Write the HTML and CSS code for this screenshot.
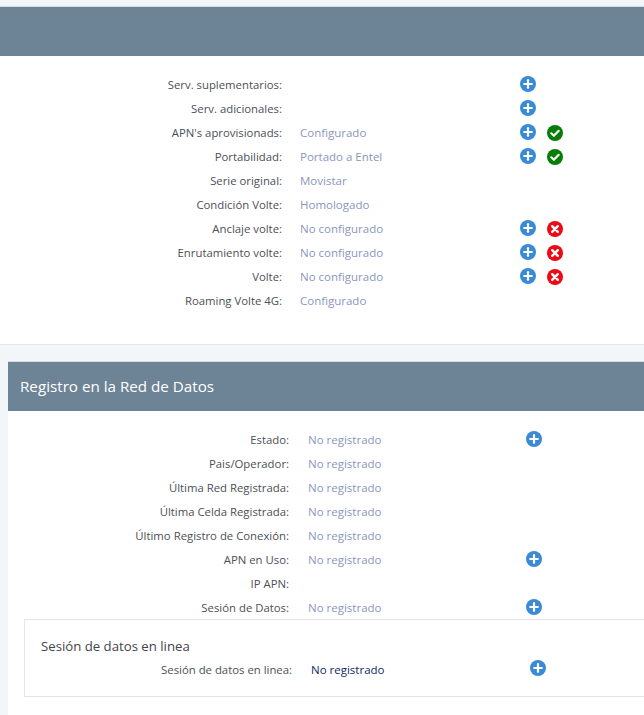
FILE: index.html
```html
<!DOCTYPE html>
<html lang="es">
<head>
<meta charset="utf-8">
<title>Registro</title>
<link rel="stylesheet" href="styles.css">
</head>
<body>
<svg class="defs" width="0" height="0" aria-hidden="true">
  <symbol id="plus" viewBox="0 0 16 16"><circle cx="8" cy="8" r="8" fill="#3a8ad6"/><path d="M8 4.2v7.6M4.2 8h7.6" stroke="#fff" stroke-width="2.2" stroke-linecap="round"/></symbol>
  <symbol id="ok" viewBox="0 0 16 16"><circle cx="8" cy="8" r="8" fill="#067d06"/><path d="M4.3 8.3l2.6 2.5 4.8-5" fill="none" stroke="#fff" stroke-width="2.2" stroke-linecap="round" stroke-linejoin="round"/></symbol>
  <symbol id="no" viewBox="0 0 16 16"><circle cx="8" cy="8" r="8" fill="#ee0a14"/><path d="M5.2 5.2l5.6 5.6M10.8 5.2l-5.6 5.6" stroke="#fff" stroke-width="2.4" stroke-linecap="round"/></symbol>
</svg>
<div class="page">
  <section class="card card-first">
    <div class="card-head"></div>
    <div class="card-body">
      <div class="row"><span class="label">Serv. suplementarios:</span><span class="value"></span><span class="icons"><svg class="ic"><use href="#plus"/></svg></span></div>
      <div class="row"><span class="label">Serv. adicionales:</span><span class="value"></span><span class="icons"><svg class="ic"><use href="#plus"/></svg></span></div>
      <div class="row"><span class="label">APN's aprovisionads:</span><span class="value">Configurado</span><span class="icons"><svg class="ic"><use href="#plus"/></svg><svg class="ic st"><use href="#ok"/></svg></span></div>
      <div class="row"><span class="label">Portabilidad:</span><span class="value">Portado a Entel</span><span class="icons"><svg class="ic"><use href="#plus"/></svg><svg class="ic st"><use href="#ok"/></svg></span></div>
      <div class="row"><span class="label">Serie original:</span><span class="value">Movistar</span><span class="icons"></span></div>
      <div class="row"><span class="label">Condición Volte:</span><span class="value">Homologado</span><span class="icons"></span></div>
      <div class="row"><span class="label">Anclaje volte:</span><span class="value">No configurado</span><span class="icons"><svg class="ic"><use href="#plus"/></svg><svg class="ic st"><use href="#no"/></svg></span></div>
      <div class="row"><span class="label">Enrutamiento volte:</span><span class="value">No configurado</span><span class="icons"><svg class="ic"><use href="#plus"/></svg><svg class="ic st"><use href="#no"/></svg></span></div>
      <div class="row"><span class="label">Volte:</span><span class="value">No configurado</span><span class="icons"><svg class="ic"><use href="#plus"/></svg><svg class="ic st"><use href="#no"/></svg></span></div>
      <div class="row"><span class="label">Roaming Volte 4G:</span><span class="value">Configurado</span><span class="icons"></span></div>
    </div>
  </section>
  <section class="card card-second">
    <div class="card-head"><h2 class="card-title">Registro en la Red de Datos</h2></div>
    <div class="card-body">
      <div class="row"><span class="label">Estado:</span><span class="value">No registrado</span><span class="icons"><svg class="ic"><use href="#plus"/></svg></span></div>
      <div class="row"><span class="label">Pais/Operador:</span><span class="value">No registrado</span><span class="icons"></span></div>
      <div class="row"><span class="label">Última Red Registrada:</span><span class="value">No registrado</span><span class="icons"></span></div>
      <div class="row"><span class="label">Última Celda Registrada:</span><span class="value">No registrado</span><span class="icons"></span></div>
      <div class="row"><span class="label">Último Registro de Conexión:</span><span class="value">No registrado</span><span class="icons"></span></div>
      <div class="row"><span class="label">APN en Uso:</span><span class="value">No registrado</span><span class="icons"><svg class="ic"><use href="#plus"/></svg></span></div>
      <div class="row"><span class="label">IP APN:</span><span class="value"></span><span class="icons"></span></div>
      <div class="row"><span class="label">Sesión de Datos:</span><span class="value">No registrado</span><span class="icons"><svg class="ic"><use href="#plus"/></svg></span></div>
      <div class="inner">
        <h3 class="inner-title">Sesión de datos en linea</h3>
        <div class="row"><span class="label">Sesión de datos en linea:</span><span class="value dark">No registrado</span><span class="icons"><svg class="ic ic-up"><use href="#plus"/></svg></span></div>
      </div>
    </div>
  </section>
</div>
</body>
</html>
```
FILE: styles.css
```css
html, body { margin: 0; padding: 0; }
body {
  width: 644px;
  height: 715px;
  overflow: hidden;
  background: #f3f6f9;
  font-family: "Open Sans", "Noto Sans", sans-serif;
  font-size: 11.5px;
  color: #4b5056;
}
.defs { position: absolute; }
.page { padding-top: 7px; }
.card { background: #fff; border-bottom: 1px solid #e4e7ea; }
.card-first { margin-bottom: 17px; }
.card-second { margin-left: 8px; }
.card-head { height: 49px; background: #6d8396; display: flex; align-items: center; padding-left: 12px; box-shadow: 0 -1px 0 #d5dbe1; }
.card-title { margin: -2px 0 0; font-size: 15.2px; font-weight: 400; color: #fff; }
.card-first .card-body { padding: 16px 0 32px; }
.card-second .card-body { padding: 16px 0 30px 0; }
.row { display: grid; height: 24px; align-items: center; grid-template-columns: 282px 18px 220px auto; }
.card-second .row { grid-template-columns: 281px 19px 218px auto; }
.label { grid-column: 1; text-align: right; white-space: nowrap; font-size: 11.35px; }
.value { grid-column: 3; color: #8a97bd; white-space: nowrap; }
.value.dark { color: #102a63; }
.icons { grid-column: 4; display: flex; gap: 11px; align-items: center; }
.ic { width: 16px; height: 16px; display: block; }
.st { position: relative; top: 1px; }
.ic-up { position: relative; top: -1px; }
.inner {
  margin: 0 0 0 16px;
  height: 76px;
  background: #fff;
  border: 1px solid #e4e7ea;
  border-right: 0;
}
.inner-title { margin: 0; padding: 16px 0 0 16px; font-size: 13.2px; line-height: 20px; font-weight: 400; color: #3f444a; }
.card-second .inner .row { grid-template-columns: 267px 19px 219px auto; margin-top: 1px; }
```
